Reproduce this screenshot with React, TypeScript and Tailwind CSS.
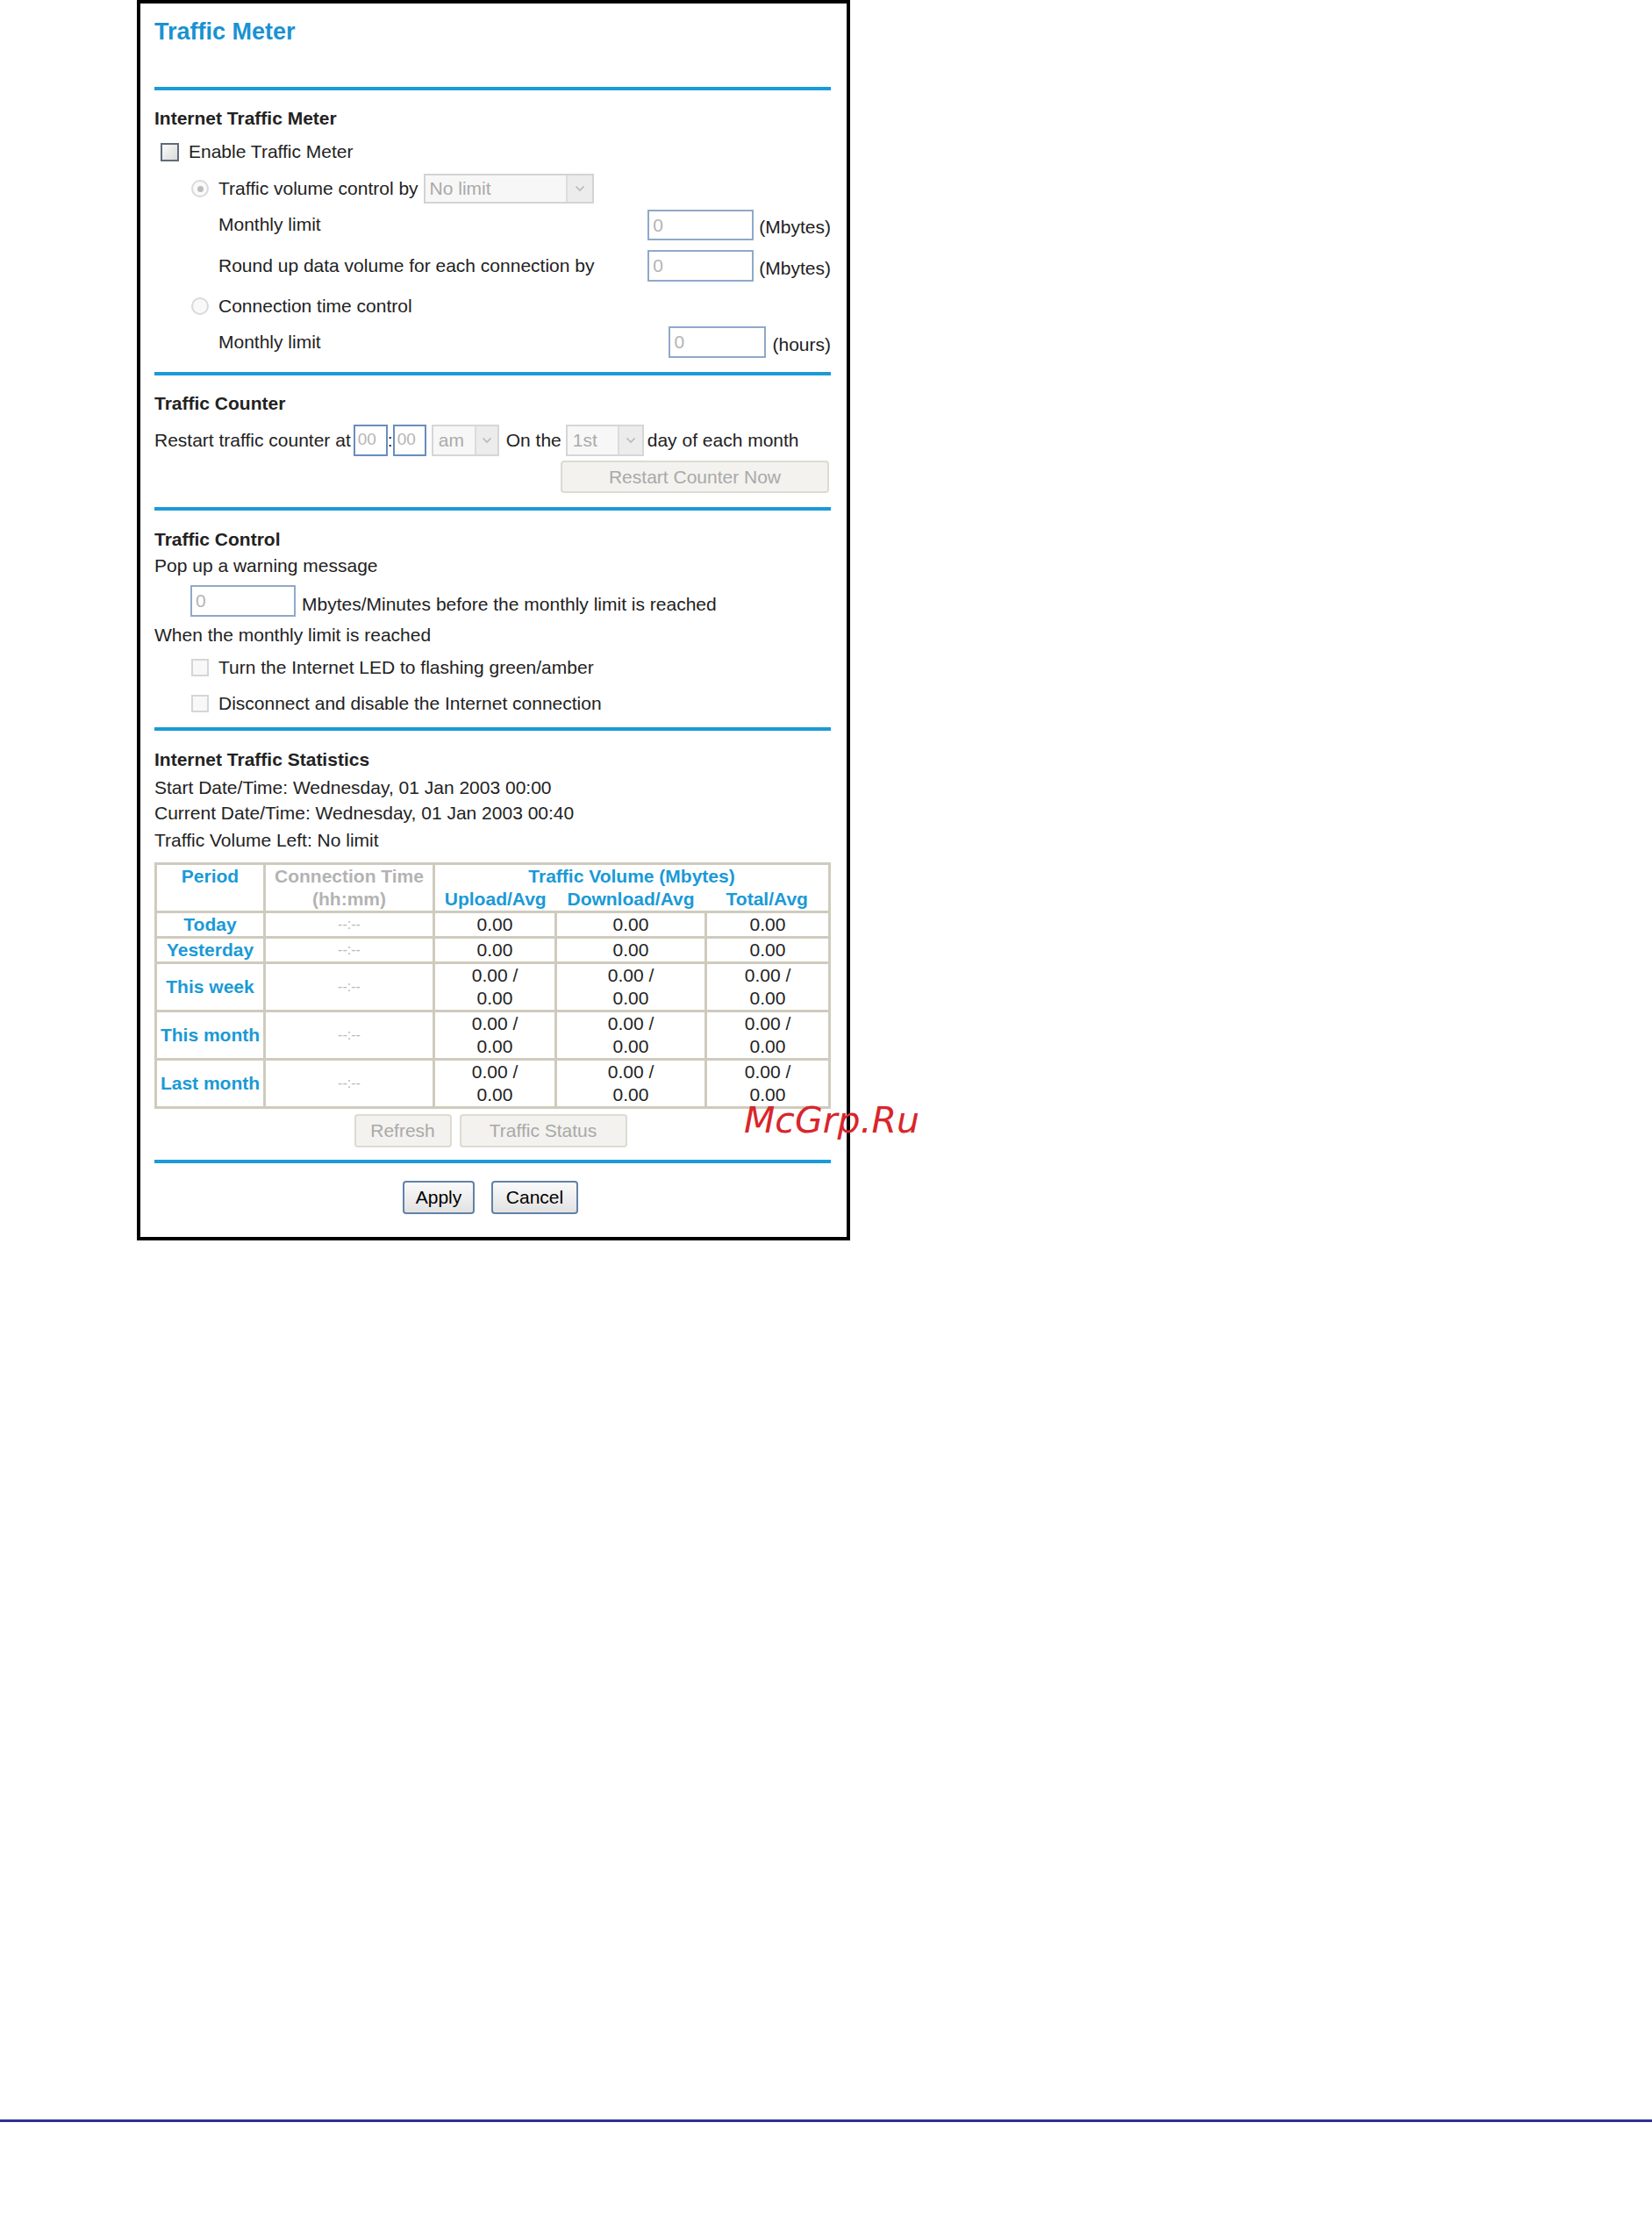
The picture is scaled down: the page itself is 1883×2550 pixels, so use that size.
import React from "react";

function Chevron() {
  return (
    <svg width="12" height="8" viewBox="0 0 12 8">
      <polyline points="1.5,1.5 6,6 10.5,1.5" fill="none" stroke="#b8b8b8" strokeWidth="1.6" />
    </svg>
  );
}

function Rule({ className }: { className: string }) {
  return <div className={"h-[4px] bg-[#1c9ad6] " + className} />;
}

function Heading({ children, className }: { children: React.ReactNode; className: string }) {
  return <div className={"h-[34px] flex items-center font-bold " + className}>{children}</div>;
}

function DisabledCheck() {
  return <span className="inline-block shrink-0 w-[20px] h-[20px] border-2 border-[#d6d6d6] bg-[#f8f8f8]" />;
}

function Radio({ dot }: { dot?: boolean }) {
  return (
    <span className="shrink-0 w-[20px] h-[20px] rounded-full border-2 border-[#d9d9d9] bg-[#f9f9f9] flex items-center justify-center">
      {dot ? <span className="w-[7px] h-[7px] rounded-full bg-[#bdbdbd]" /> : null}
    </span>
  );
}

const rows = [
  { p: "Today", two: false, h: "h-[27px]" },
  { p: "Yesterday", two: false, h: "h-[26px]" },
  { p: "This week", two: true, h: "h-[52px]" },
  { p: "This month", two: true, h: "h-[52px]" },
  { p: "Last month", two: true, h: "h-[52px]" },
];

function StatsTable() {
  return (
    <table className="mt-[9px] w-[768px] table-fixed border-collapse text-[21px] leading-[26px]">
      <colgroup>
        <col className="w-[124px]" />
        <col className="w-[193px]" />
        <col className="w-[139px]" />
        <col className="w-[171px]" />
        <col className="w-[141px]" />
      </colgroup>
      <tbody>
        <tr>
          <td rowSpan={2} className="p-0 align-top text-center font-bold text-[#1a9ad6] border-[3px] border-[#cfcbbd]">
            Period
          </td>
          <td rowSpan={2} className="p-0 align-top text-center font-bold text-[#b3b3b3] border-[3px] border-[#cfcbbd]">
            <div>Connection Time</div>
            <div>(hh:mm)</div>
          </td>
          <td colSpan={3} className="p-0 h-[26px] text-center font-bold text-[#1a9ad6] border-t-[3px] border-l-[3px] border-r-[3px] border-b-0 border-[#cfcbbd]">
            Traffic Volume (Mbytes)
          </td>
        </tr>
        <tr>
          <td className="p-0 h-[26px] text-center font-bold text-[#1a9ad6] border-l-[3px] border-b-[3px] border-t-0 border-r-0 border-[#cfcbbd]">
            Upload/Avg
          </td>
          <td className="p-0 h-[26px] text-center font-bold text-[#1a9ad6] border-b-[3px] border-t-0 border-l-0 border-r-0 border-[#cfcbbd]">
            Download/Avg
          </td>
          <td className="p-0 h-[26px] text-center font-bold text-[#1a9ad6] border-b-[3px] border-r-[3px] border-t-0 border-l-0 border-[#cfcbbd]">
            Total/Avg
          </td>
        </tr>
        {rows.map((r) => (
          <tr key={r.p}>
            <td className={"p-0 text-center font-bold text-[#1a9ad6] border-[3px] border-[#cfcbbd] " + r.h}>{r.p}</td>
            <td className="p-0 text-center text-[16px] text-[#b8b8b8] border-[3px] border-[#cfcbbd]">--:--</td>
            {[0, 1, 2].map((i) => (
              <td key={i} className="p-0 text-center text-[#222] border-[3px] border-[#cfcbbd]">
                {r.two ? (
                  <>
                    <div>0.00 /</div>
                    <div>0.00</div>
                  </>
                ) : (
                  "0.00"
                )}
              </td>
            ))}
          </tr>
        ))}
      </tbody>
    </table>
  );
}

export default function App() {
  return (
    <div className="relative bg-white font-['Liberation_Sans',Arial,sans-serif] text-[21px] text-[#222]">
      <div className="ml-[156px] w-[813px] h-[1414px] border-[4px] border-black pl-[16px] pr-[18px]">
        <div className="pt-[16px] text-[27px] leading-[32px] font-bold text-[#1a92d2]">Traffic Meter</div>
        <Rule className="mt-[47px]" />

        {/* Internet Traffic Meter */}
        <Heading className="mt-[15px]">Internet Traffic Meter</Heading>
        <div className="h-[42px] flex items-center pl-[7px]">
          <span className="inline-block shrink-0 w-[21px] h-[21px] border-2 border-[#5f6b7b] bg-linear-to-br from-[#fbfbfb] to-[#dadada]" />
          <span className="ml-[11px]">Enable Traffic Meter</span>
        </div>
        <div className="h-[42px] flex items-center pl-[42px]">
          <Radio dot />
          <span className="ml-[11px]">Traffic volume control by</span>
          <span className="ml-[6px] flex w-[194px] h-[34px] border-2 border-[#d3d3d3] bg-[#f7f7f7]">
            <span className="flex-1 pl-[5px] leading-[30px] text-[#a9a9a9]">No limit</span>
            <span className="w-[30px] border-l-2 border-[#dcdcdc] bg-[#ececec] flex items-center justify-center">
              <Chevron />
            </span>
          </span>
        </div>
        <div className="h-[40px] flex items-center pl-[73px]">
          <span>Monthly limit</span>
          <span className="ml-auto w-[121px] h-[35px] border-2 border-[#8fa9c9] pl-[4px] leading-[31px] text-[#b4b4b4]">0</span>
          <span className="ml-[6px] pt-[6px]">(Mbytes)</span>
        </div>
        <div className="h-[54px] flex items-center pl-[73px]">
          <span>Round up data volume for each connection by</span>
          <span className="ml-auto w-[121px] h-[36px] border-2 border-[#8fa9c9] pl-[4px] leading-[32px] text-[#b4b4b4]">0</span>
          <span className="ml-[6px] pt-[6px]">(Mbytes)</span>
        </div>
        <div className="h-[38px] flex items-center pl-[42px]">
          <Radio />
          <span className="ml-[11px]">Connection time control</span>
        </div>
        <div className="h-[44px] flex items-center pl-[73px]">
          <span>Monthly limit</span>
          <span className="ml-auto w-[111px] h-[36px] border-2 border-[#8fa9c9] pl-[4px] leading-[32px] text-[#b4b4b4]">0</span>
          <span className="ml-[7px] pt-[6px]">(hours)</span>
        </div>
        <Rule className="mt-[12px]" />

        {/* Traffic Counter */}
        <Heading className="mt-[15px]">Traffic Counter</Heading>
        <div className="mt-[3px] h-[44px] flex items-center">
          <span>Restart traffic counter at</span>
          <span className="ml-[3px] w-[39px] h-[36px] border-2 border-[#6a8dbd] pl-[3px] leading-[30px] text-[19px] text-[#b4b4b4]">00</span>
          <span className="w-[6px] text-center">:</span>
          <span className="w-[38px] h-[36px] border-2 border-[#6a8dbd] pl-[3px] leading-[30px] text-[19px] text-[#b4b4b4]">00</span>
          <span className="ml-[6px] flex w-[77px] h-[36px] border-2 border-[#d6d6d6] bg-[#f7f7f7]">
            <span className="flex-1 pl-[6px] leading-[32px] text-[#ababab]">am</span>
            <span className="w-[26px] border-l-2 border-[#dcdcdc] bg-[#ececec] flex items-center justify-center">
              <Chevron />
            </span>
          </span>
          <span className="ml-[8px]">On the</span>
          <span className="ml-[5px] flex w-[89px] h-[36px] border-2 border-[#d6d6d6] bg-[#f7f7f7]">
            <span className="flex-1 pl-[6px] leading-[32px] text-[#ababab]">1st</span>
            <span className="w-[28px] border-l-2 border-[#dcdcdc] bg-[#ececec] flex items-center justify-center">
              <Chevron />
            </span>
          </span>
          <span className="ml-[4px]">day of each month</span>
        </div>
        <div className="mt-[1px] h-[38px] flex justify-end pr-[2px]">
          <span className="w-[306px] h-[37px] rounded-[4px] border-2 border-[#dddbd1] bg-[#f3f2ee] flex items-center justify-center text-[#a9a9a9]">
            Restart Counter Now
          </span>
        </div>
        <Rule className="mt-[15px]" />

        {/* Traffic Control */}
        <Heading className="mt-[16px]">Traffic Control</Heading>
        <div className="h-[26px] flex items-center">Pop up a warning message</div>
        <div className="mt-[4px] h-[46px] flex items-center pl-[41px]">
          <span className="w-[120px] h-[36px] border-2 border-[#8fa9c9] pl-[4px] leading-[32px] text-[#b4b4b4]">0</span>
          <span className="ml-[7px] pt-[8px]">Mbytes/Minutes before the monthly limit is reached</span>
        </div>
        <div className="h-[32px] flex items-center">When the monthly limit is reached</div>
        <div className="h-[42px] flex items-center pl-[42px]">
          <DisabledCheck />
          <span className="ml-[11px]">Turn the Internet LED to flashing green/amber</span>
        </div>
        <div className="h-[40px] flex items-center pl-[42px]">
          <DisabledCheck />
          <span className="ml-[11px]">Disconnect and disable the Internet connection</span>
        </div>
        <Rule className="mt-[7px]" />

        {/* Statistics */}
        <Heading className="mt-[16px]">Internet Traffic Statistics</Heading>
        <div className="h-[29px] flex items-center">Start Date/Time: Wednesday, 01 Jan 2003 00:00</div>
        <div className="h-[30px] flex items-center">Current Date/Time: Wednesday, 01 Jan 2003 00:40</div>
        <div className="h-[32px] flex items-center">Traffic Volume Left: No limit</div>
        <StatsTable />
        <div className="mt-[6px] flex justify-center gap-[9px] pr-[5px]">
          <span className="w-[111px] h-[38px] rounded-[4px] border-2 border-[#dddbd1] bg-[#f3f2ee] flex items-center justify-center text-[#a9a9a9]">
            Refresh
          </span>
          <span className="w-[191px] h-[38px] rounded-[4px] border-2 border-[#dddbd1] bg-[#f3f2ee] flex items-center justify-center text-[#a9a9a9]">
            Traffic Status
          </span>
        </div>
        <Rule className="mt-[14px]" />
        <div className="mt-[20px] flex justify-center gap-[19px] pr-[5px]">
          <span className="w-[82px] h-[38px] rounded-[4px] border-2 border-[#6282a8] bg-linear-to-b from-[#fafafa] to-[#e2e2e2] flex items-center justify-center text-black">
            Apply
          </span>
          <span className="w-[99px] h-[38px] rounded-[4px] border-2 border-[#6282a8] bg-linear-to-b from-[#fafafa] to-[#e2e2e2] flex items-center justify-center text-black">
            Cancel
          </span>
        </div>
      </div>
      <div className="mt-[1002px] h-[3px] bg-[#2e3192]" />
      <div className="absolute left-[848px] top-[1257px] z-10 font-['DejaVu_Sans',sans-serif] italic text-[41px] leading-[40px] text-[#d8262c] whitespace-nowrap">
        McGrp.Ru
      </div>
    </div>
  );
}
